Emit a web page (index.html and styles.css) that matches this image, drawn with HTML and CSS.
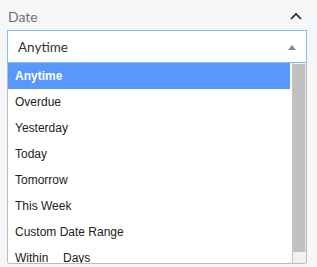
FILE: index.html
```html
<!DOCTYPE html>
<html>
<head>
    <meta charset="UTF-8">
    <link rel="stylesheet" href="styles.css">
</head>
<body>
<div class="filter">
    <div class="filter-head">
        <span class="filter-label">Date</span>
        <svg class="chevron" width="12" height="8" viewBox="0 0 12 8">
            <path d="M1 7 L6 2 L11 7" fill="none" stroke="#222" stroke-width="1.6"/>
        </svg>
    </div>
    <div class="select">
        <span class="select-value">Anytime</span>
        <span class="select-arrow"></span>
    </div>
    <div class="options">
        <ul class="option-list">
            <li class="option selected">Anytime</li>
            <li class="option">Overdue</li>
            <li class="option">Yesterday</li>
            <li class="option">Today</li>
            <li class="option">Tomorrow</li>
            <li class="option">This Week</li>
            <li class="option">Custom Date Range</li>
            <li class="option">Within <span class="days-input"></span> Days</li>
        </ul>
        <div class="scrollbar">
            <div class="scroll-thumb"></div>
        </div>
    </div>
</div>
</body>
</html>
```

FILE: styles.css
```css
* {
    box-sizing: border-box;
}

body {
    margin: 0;
    background-color: #f5f6f8;
    font-family: "Liberation Sans", Arial, sans-serif;
}

.filter {
    padding: 5px 10px 0 7px;
}

.filter-head {
    height: 22px;
    margin-bottom: 3px;
    padding-left: 1px;
    display: flex;
    justify-content: space-between;
    align-items: center;
}

.filter-label {
    font-family: Lato, sans-serif;
    font-size: 14px;
    color: #707070;
}

.chevron {
    margin-right: 5px;
}

.select {
    height: 33px;
    background-color: white;
    border: 1px solid #8fb6f5;
    display: flex;
    justify-content: space-between;
    align-items: center;
    padding: 0 10px 0 10px;
}

.select-value {
    font-family: Lato, sans-serif;
    font-size: 13.5px;
    color: #333;
}

.select-arrow {
    width: 0;
    height: 0;
    border-left: 4px solid transparent;
    border-right: 4px solid transparent;
    border-bottom: 5px solid #8a8a8a;
    margin-top: 2px;
}

.options {
    height: 201px;
    display: flex;
    background-color: white;
    border: 1px solid #bdbdbd;
    border-top: none;
    border-radius: 0 0 3px 3px;
    overflow: hidden;
}

.option-list {
    flex: 1;
    list-style: none;
    margin: 0;
    padding: 0 2px 0 0;
    overflow: hidden;
}

.option {
    height: 26px;
    line-height: 26px;
    padding-left: 7px;
    font-size: 12px;
    color: #222;
}

.option.selected {
    background-color: #5897fb;
    color: white;
    font-weight: bold;
}

.days-input {
    display: inline-block;
    width: 8px;
}

.scrollbar {
    width: 14px;
    background-color: #f1f1f1;
    border-left: 1px solid #c4c4c4;
    padding-top: 1px;
}

.scroll-thumb {
    height: 188px;
    background-color: #c1c1c1;
    border-right: 1px solid #e2e2e2;
}
```
